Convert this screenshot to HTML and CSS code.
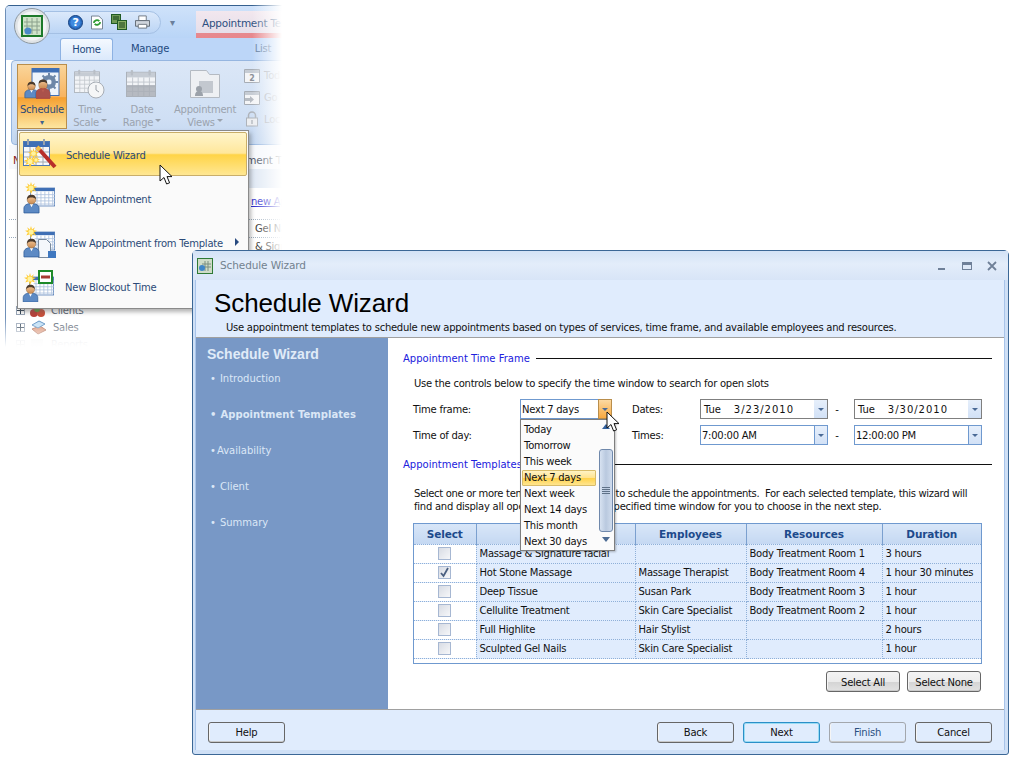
FILE: index.html
```html
<!DOCTYPE html>
<html lang="en">
<head>
<meta charset="utf-8">
<title>Schedule Wizard</title>
<link rel="stylesheet" href="styles.css">
</head>
<body>
<svg class="defs" width="0" height="0" aria-hidden="true">
  <defs>
    <linearGradient id="skin" x1="0" y1="0" x2="0" y2="1"><stop offset="0" stop-color="#f6c99a"/><stop offset="1" stop-color="#c98a50"/></linearGradient>
    <symbol id="person" viewBox="0 0 18 22">
      <path d="M1 21v-5c0-3 3-5 8-5s8 2 8 5v5z" fill="#5d8ac4" stroke="#2e5c98" stroke-width=".8"/>
      <path d="M7 11l2 4 2-4z" fill="#fff"/>
      <circle cx="9" cy="7" r="4.6" fill="url(#skin)" stroke="#8a6238" stroke-width=".5"/>
      <path d="M4.4 7C4 3 6.500 1.800 9 1.800S14 3 13.600 7c-1-2-2.500-2.400-4.600-2.400S5.400 5 4.400 7z" fill="#4a3a2c"/>
    </symbol>
    <symbol id="sun" viewBox="0 0 14 14">
      <path d="M7 0l1.200 4L11.500 1.500 10 5l4 .5-3.500 2 2.500 3.500-4-1.500L7 14l-1.500-4.500L1.500 11l2-3.500L0 5.500 4 5 2.500 1.500 5.800 4z" fill="#ffcc33"/>
      <circle cx="7" cy="7" r="3" fill="#fff3a0"/>
    </symbol>
    <symbol id="sheet" viewBox="0 0 32 24">
      <rect x=".5" y=".5" width="31" height="23" fill="#fff" stroke="#4f79b4"/>
      <rect x=".5" y=".5" width="31" height="4" fill="#3f6fb5"/>
      <path d="M6 9h26M6 13h26M6 17h26M6 21h26M9 5v18M14 5v18M19 5v18M24 5v18M29 5v18" stroke="#a9bfdc" stroke-width="1"/>
    </symbol>
    <symbol id="graycal" viewBox="0 0 32 30">
      <rect x=".5" y="3.500" width="31" height="26" fill="#f2f4f7" stroke="#a7adb5"/>
      <rect x="1" y="4" width="30" height="5" fill="#c6ccd4"/>
      <rect x="5" y="1" width="2.500" height="6" rx="1" fill="#b8bec6"/>
      <rect x="24" y="1" width="2.500" height="6" rx="1" fill="#b8bec6"/>
      <path d="M1 14h30M1 19h30M1 24h30M7 9v20M13 9v20M19 9v20M25 9v20" stroke="#c1c6cd"/>
    </symbol>
    <symbol id="cursor" viewBox="0 0 14 22">
      <path d="M1 1v16l4-3.500 2.600 6.500 3-1.200-2.600-6.200h5z" fill="#fff" stroke="#111" stroke-width="1"/>
    </symbol>
  </defs>
</svg>

<main class="desktop">
  <section class="appwin">
    <div class="qat-row">
      <div class="orb">
        <svg width="36" height="36" viewBox="0 0 36 36">
          <circle cx="18" cy="18" r="17.500" fill="#dfe3e6" stroke="#8c979f"/>
          <circle cx="18" cy="18" r="14.500" fill="#f3f5f5"/>
          <rect x="8" y="8" width="20" height="20" fill="#cfe3c8" stroke="#1d7a2a" stroke-width="2"/>
          <path d="M13 10v16M18 10v16M23 10v16M10 14h16M10 18h16M10 22h16" stroke="#8aa08c"/>
          <circle cx="14" cy="23" r="3.500" fill="#4a89c8"/>
        </svg>
      </div>
      <div class="qat-pill">
        <svg width="15" height="15" viewBox="0 0 15 15"><circle cx="7.500" cy="7.500" r="7" fill="#2a6cc0" stroke="#16407e"/><circle cx="7.500" cy="7.500" r="5" fill="#3f8adf"/><text x="7.500" y="11" class="q-mark">?</text></svg>
        <svg width="12" height="15" viewBox="0 0 13 15"><path d="M.5.500h8l4 4v10H.5z" fill="#fff" stroke="#6b7a8a"/><path d="M3 8a3.500 3.500 0 0 1 6-2M10 7a3.500 3.500 0 0 1-6 2" fill="none" stroke="#2c9a30" stroke-width="2"/></svg>
        <svg width="16" height="16" viewBox="0 0 16 16"><rect x=".5" y=".5" width="9" height="9" fill="#6f9a55" stroke="#1f5a24"/><rect x="6.500" y="6.500" width="9" height="9" fill="#8ab066" stroke="#1f5a24"/><path d="M2 3h6M2 5h6M8 9h6M8 11h6M8 13h6" stroke="#123f18"/></svg>
        <svg width="15" height="14" viewBox="0 0 16 14"><path d="M4 .5h8v5H4z" fill="#fff" stroke="#6e7680"/><path d="M.5 5.500h15v6H.5z" fill="#cfd5dc" stroke="#5e6670"/><path d="M3.500 9.500h9v4h-9z" fill="#fff" stroke="#6e7680"/></svg>
      </div>
      <span class="qat-more">▾</span>
      <span class="ctx-tab">Appointment Templates</span>
    </div>
    <div class="tabs">
      <span class="tab active">Home</span>
      <span class="tab">Manage</span>
      <span class="tab last">List</span>
    </div>
    <div class="ribbon">
      <div class="rb rb-on">
        <svg width="36" height="32" viewBox="0 0 36 32">
          <rect x="8" y=".5" width="27" height="27" fill="#eef4fb" stroke="#3f6fb5"/>
          <rect x="8" y=".5" width="27" height="4" fill="#3f6fb5"/>
          <circle cx="25" cy="14" r="7" fill="#6d87a8"/><circle cx="25" cy="14" r="3" fill="#eef4fb"/>
          <path d="M25 5v18M16 14h18M18.500 7.500l13 13M31.500 7.500l-13 13" stroke="#6d87a8" stroke-width="2"/>
          <circle cx="25" cy="14" r="2.500" fill="#eef4fb"/>
          <use href="#person" x="0" y="12" width="15" height="19"/>
          <g transform="translate(11 11)"><use href="#person" width="16" height="20"/></g>
          <path d="M12 31v-6c0-3 3-5 7-5s7 2 7 5v6z" fill="#b24a3e" opacity=".9"/>
          <circle cx="19" cy="16" r="4.200" fill="url(#skin)"/>
          <path d="M14.800 16c-.4-3.500 2-4.500 4.200-4.500s4.600 1 4.200 4.500c-1-1.600-2.400-2-4.200-2s-3.200.4-4.200 2z" fill="#4a3a2c"/>
        </svg>
        <span class="rb-label">Schedule</span>
        <span class="rb-arrow">▾</span>
      </div>
      <div class="rb rb-time">
        <svg width="32" height="30" viewBox="0 0 32 30"><use href="#graycal" width="26" height="24"/><circle cx="22" cy="21" r="8" fill="#f5f6f7" stroke="#a7adb5"/><path d="M22 16v5l3 2" fill="none" stroke="#9aa0a8"/></svg>
        <span class="rb-label">Time</span>
        <span class="rb-label">Scale<i class="caret"></i></span>
      </div>
      <div class="rb rb-date">
        <svg width="32" height="30" viewBox="0 0 32 30"><use href="#graycal" width="30" height="28"/><rect x="1" y="16" width="28" height="11" fill="#a6abb3" opacity=".8"/></svg>
        <span class="rb-label">Date</span>
        <span class="rb-label">Range<i class="caret"></i></span>
      </div>
      <div class="rb rb-views">
        <svg width="30" height="30" viewBox="0 0 30 30"><path d="M.5 1.500h16l3 4h10v23H.5z" fill="#eef0f3" stroke="#b4bac2"/><rect x="9" y="12" width="14" height="12" fill="#c3c8cf"/><circle cx="9" cy="20" r="3" fill="#9ca2aa"/><path d="M5 27c0-4 2-5 4-5s4 1 4 5z" fill="#9ca2aa"/></svg>
        <span class="rb-label">Appointment</span>
        <span class="rb-label">Views<i class="caret"></i></span>
      </div>
      <div class="rb-small">
        <div class="rs-row"><svg width="16" height="16" viewBox="0 0 16 16"><path d="M.5 2.500h15v13H.5z" fill="#f4f5f7" stroke="#a7adb5"/><rect x="1" y="3" width="14" height="3" fill="#c6ccd4"/><text x="8" y="14" class="cal-num">2</text></svg><span>Today</span></div>
        <div class="rs-row"><svg width="16" height="16" viewBox="0 0 16 16"><path d="M.5 2.500h15v13H.5z" fill="#f4f5f7" stroke="#a7adb5"/><rect x="1" y="3" width="14" height="3" fill="#c6ccd4"/><path d="M1 9h5V7l4 3.500L6 14v-2H1z" fill="#b7bcc3"/></svg><span>Go To</span></div>
        <div class="rs-row"><svg width="16" height="16" viewBox="0 0 16 16"><path d="M4.500 7V4.500a3.500 3.500 0 0 1 7 0V7" fill="none" stroke="#aeb3ba" stroke-width="1.500"/><rect x="2.500" y="7" width="11" height="8" fill="#eceef1" stroke="#aeb3ba"/><path d="M8 9v4" stroke="#9ea4ac"/></svg><span>Lock</span></div>
      </div>
    </div>
    <div class="doc">
      <div class="doc-heads"><span class="n-cut">N</span><span>ment T</span></div>
      <div class="doc-band"></div>
      <div class="doc-link"><a>new Ap</a></div>
      <div class="doc-cell">Gel Na</div>
      <div class="doc-cell doc-dark">&amp; Sign</div>
      <div class="tree">
        <div class="tree-row tree-clients"><i class="plus"></i><svg width="16" height="12" viewBox="0 0 16 12"><circle cx="4" cy="8" r="4" fill="#b8423a"/><circle cx="11" cy="8" r="4" fill="#c8503a"/><circle cx="7" cy="4" r="3" fill="#5e9a40"/></svg><span>Clients</span></div>
        <div class="tree-row"><i class="plus"></i><svg width="18" height="16" viewBox="0 0 18 16"><path d="M2 9l8-3 6 4-8 4z" fill="#d88a6a" stroke="#a85c40"/><path d="M2 5l7-4 6 3-7 4z" fill="#bcdcf4" stroke="#4f86bc"/></svg><span>Sales</span></div>
        <div class="tree-row tree-faded"><i class="plus"></i><svg width="16" height="14" viewBox="0 0 16 14"><rect x="1" y="1" width="12" height="12" fill="#d8dce0"/></svg><span>Reports</span></div>
      </div>
    </div>
  </section>
  <div class="fade-right"></div>
  <div class="fade-bottom"></div>

  <nav class="menu">
    <div class="menu-item hot">
      <svg width="34" height="32" viewBox="0 0 34 32">
        <rect x=".5" y="3.500" width="26" height="24" fill="#f6f8fb" stroke="#4f79b4"/>
        <rect x="1" y="4" width="25" height="5" fill="#3f6fb5"/>
        <rect x="4" y="1" width="2" height="6" fill="#98a2ae"/><rect x="20" y="1" width="2" height="6" fill="#98a2ae"/>
        <path d="M1 14h25M1 19h25M1 24h25M7 9v18M13 9v18M20 9v18" stroke="#a3a9b2"/>
        <path d="M14 9l18 20" stroke="#b82e2a" stroke-width="4"/><path d="M14 9l3 3" stroke="#f2c24a" stroke-width="4"/>
        <use href="#sun" x="5" y="10" width="11" height="11"/><use href="#sun" x="1" y="17" width="12" height="13"/><use href="#sun" x="9" y="18" width="8" height="8"/>
      </svg>
      <span>Schedule Wizard</span>
    </div>
    <div class="menu-item">
      <svg width="34" height="32" viewBox="0 0 34 32"><use href="#sheet" x="8" y="3" width="25" height="24"/><use href="#sun" x="3" y="0" width="12" height="12"/><use href="#person" x="1" y="11" width="17" height="21"/></svg>
      <span>New Appointment</span>
    </div>
    <div class="menu-item">
      <svg width="34" height="32" viewBox="0 0 34 32"><use href="#sheet" x="8" y="3" width="25" height="24"/><use href="#sun" x="3" y="0" width="12" height="12"/><path d="M16.500 13.500h8l4 4v14h-12z" fill="#f4f7fb" stroke="#7a8a9c"/><rect x="26" y="25" width="8" height="7" fill="#3f78c0"/><use href="#person" x="1" y="11" width="17" height="21"/></svg>
      <span>New Appointment from Template</span>
      <i class="sub-arrow"></i>
    </div>
    <div class="menu-item">
      <svg width="34" height="32" viewBox="0 0 34 32"><use href="#sheet" x="7" y="4" width="25" height="24"/><rect x="17" y="1" width="13" height="12" fill="#fff" stroke="#1e8a2a" stroke-width="2"/><rect x="19" y="5.500" width="9" height="3" fill="#a83a34"/><use href="#sun" x="2" y="3" width="12" height="12"/><use href="#person" x="0" y="13" width="17" height="20"/></svg>
      <span>New Blockout Time</span>
    </div>
  </nav>
  <svg class="cursor cursor-menu" width="14" height="22"><use href="#cursor"/></svg>

  <section class="wizard">
    <header class="titlebar">
      <svg width="16" height="16" viewBox="0 0 16 16"><rect x=".5" y=".5" width="15" height="15" fill="#cfdcc8" stroke="#2f7a36"/><path d="M8 3v10M11 3v10M5 6h9M5 9h9" stroke="#7a8e80"/><circle cx="5" cy="10" r="3" fill="#3f86c8"/></svg>
      <span class="title-text">Schedule Wizard</span>
      <span class="win-btns">
        <svg width="10" height="10" viewBox="0 0 10 10"><path d="M1 7h7v2H1z" fill="#6f8098"/></svg>
        <svg width="10" height="10" viewBox="0 0 10 10"><path d="M0 1h10v8H0z" fill="#6f8098"/><path d="M1 4h8v4H1z" fill="#dfe9f7"/></svg>
        <svg width="10" height="10" viewBox="0 0 10 10"><path d="M1 1l8 8M9 1l-8 8" stroke="#6f8098" stroke-width="1.800"/></svg>
      </span>
    </header>
    <div class="frame">
      <div class="banner">
        <h1>Schedule Wizard</h1>
        <p>Use appointment templates to schedule new appointments based on types of services, time frame, and available employees and resources.</p>
      </div>
      <div class="body">
        <aside class="side">
          <h2>Schedule Wizard</h2>
          <ul>
            <li>Introduction</li>
            <li class="current">Appointment Templates</li>
            <li class="tight">Availability</li>
            <li>Client</li>
            <li>Summary</li>
          </ul>
        </aside>
        <div class="content">
          <div class="legend"><span>Appointment Time Frame</span></div>
          <p class="hint">Use the controls below to specify the time window to search for open slots</p>
          <div class="form">
            <label>Time frame:</label>
            <div class="combo focus"><span>Next 7 days</span><b class="drop hot-drop"></b></div>
            <label class="l2">Dates:</label>
            <div class="combo gray"><span class="date"><em>Tue</em>3/23/2010</span><b class="drop pale"></b></div>
            <i class="dash">-</i>
            <div class="combo gray"><span class="date"><em>Tue</em>3/30/2010</span><b class="drop pale"></b></div>
            <label>Time of day:</label>
            <div class="combo blank"></div>
            <label class="l2">Times:</label>
            <div class="combo blue"><span>7:00:00 AM</span><b class="drop"></b></div>
            <i class="dash">-</i>
            <div class="combo blue"><span>12:00:00 PM</span><b class="drop"></b></div>
          </div>
          <div class="legend second"><span>Appointment Templates</span></div>
          <p class="para">Select one or more templates from the list to schedule the appointments.&nbsp; For each selected template, this wizard will<br>find and display all open slots within the specified time window for you to choose in the next step.</p>
          <div class="gridbox">
            <table class="grid">
              <colgroup><col class="c1"><col class="c2"><col class="c3"><col class="c4"><col class="c5"></colgroup>
              <thead><tr><th>Select</th><th>Template</th><th>Employees</th><th>Resources</th><th>Duration</th></tr></thead>
              <tbody>
                <tr><td class="ck"><i class="box"></i></td><td>Massage &amp; Signature facial</td><td></td><td>Body Treatment Room 1</td><td>3 hours</td></tr>
                <tr><td class="ck"><i class="box on"><svg width="11" height="11" viewBox="0 0 11 11"><path d="M2 6l2.500 3L9 1" fill="none" stroke="#4a5f80" stroke-width="1.800"/></svg></i></td><td>Hot Stone Massage</td><td>Massage Therapist</td><td>Body Treatment Room 4</td><td>1 hour 30 minutes</td></tr>
                <tr><td class="ck"><i class="box"></i></td><td>Deep Tissue</td><td>Susan Park</td><td>Body Treatment Room 3</td><td>1 hour</td></tr>
                <tr><td class="ck"><i class="box"></i></td><td>Cellulite Treatment</td><td>Skin Care Specialist</td><td>Body Treatment Room 2</td><td>1 hour</td></tr>
                <tr><td class="ck"><i class="box"></i></td><td>Full Highlite</td><td>Hair Stylist</td><td></td><td>2 hours</td></tr>
                <tr><td class="ck"><i class="box"></i></td><td>Sculpted Gel Nails</td><td>Skin Care Specialist</td><td></td><td>1 hour</td></tr>
              </tbody>
            </table>
          </div>
          <div class="grid-btns">
            <button class="btn silver">Select All</button>
            <button class="btn silver">Select None</button>
          </div>
          <div class="listbox">
            <div class="opts">
              <div>Today</div><div>Tomorrow</div><div>This week</div><div class="sel">Next 7 days</div><div>Next week</div><div>Next 14 days</div><div>This month</div><div>Next 30 days</div>
            </div>
            <div class="sbar">
              <i class="s-up"></i>
              <div class="thumb"><i></i></div>
              <i class="s-down"></i>
            </div>
          </div>
        </div>
      </div>
      <footer class="foot">
        <button class="btn">Help</button>
        <div class="foot-right">
          <button class="btn">Back</button>
          <button class="btn default">Next</button>
          <button class="btn disabled">Finish</button>
          <button class="btn">Cancel</button>
        </div>
      </footer>
    </div>
  </section>
  <svg class="cursor cursor-list" width="14" height="22"><use href="#cursor"/></svg>
</main>
</body>
</html>
```
FILE: styles.css
```css
* { box-sizing: border-box; }
html, body { margin: 0; padding: 0; background: #fff; }
body { font-family: "DejaVu Sans", sans-serif; font-size: 10px; letter-spacing: -.25px; color: #111; overflow: hidden; }
.defs { position: absolute; }
.desktop { position: relative; width: 1018px; height: 760px; overflow: hidden; }

/* back application window */
.appwin { position: absolute; left: 5px; top: 5px; width: 285px; height: 345px; background: #fff; border-left: 1px solid #6e8fb8; border-top: 1px solid #35608f; border-radius: 5px 0 0 0; overflow: hidden; }
.qat-row { height: 32px; display: flex; align-items: center; background: linear-gradient(#cfe2fa, #b9d5f7); position: relative; padding-left: 8px; }
.orb { width: 36px; height: 36px; margin-top: 8px; position: relative; z-index: 2; flex: none; }
.qat-pill { display: flex; align-items: center; gap: 8px; height: 23px; margin-left: -6px; padding: 0 10px 0 23px; background: linear-gradient(#dbe9fb, #bcd5f5); border: 1px solid #a4c0e4; border-radius: 0 12px 12px 0; flex: none; }
.qat-more { color: #6a7f9c; font-size: 10px; margin-left: 9px; width: 16px; flex: none; }
.ctx-tab { margin-left: 10px; height: 27px; padding: 6px 6px; align-self: flex-end; background: linear-gradient(#f2e7ee, #e6dfea 80%, #e58a90 80%, #e9878d); color: #2d4f80; white-space: nowrap; font-size: 10.500px; flex: none; }
.tabs { height: 22px; display: flex; background: #bcd6f8; padding-left: 54px; position: relative; }
.tab { width: 53px; flex: none; text-align: center; line-height: 21px; color: #1f4a80; }
.tab.active { background: linear-gradient(#f4f9ff, #dbe9fb); border: 1px solid #8db2e3; border-bottom: 0; border-radius: 3px 3px 0 0; }
.tab:nth-child(2) { width: 74px; }
.tab.last { margin-left: 51px; width: 50px; color: #5c7aa0; }
.ribbon { height: 85px; display: flex; margin: 0 0 0 5px; padding: 3px 0 0 5px; background: linear-gradient(#dbe7f7, #cfdff4 70%, #c2d6f0); border: 1px solid #96b6e0; border-radius: 4px 0 0 4px; position: relative; }
.rb { width: 50px; height: 65px; flex: none; display: flex; flex-direction: column; align-items: center; color: #9ba3ae; font-size: 10px; line-height: 13px; padding-top: 4px; }
.rb svg { height: 32px; margin-bottom: 3px; flex: none; }
.rb-on { padding-top: 3px; background: linear-gradient(#fad59a, #f8b460 50%, #f5a030 52%, #fde6a0); border: 1px solid #b98e4c; color: #2a4a78; }
.rb-time { width: 46px; }
.rb-date { width: 58px; }
.rb-views { width: 68px; }
.rb-label { white-space: nowrap; }
.rb-arrow { font-size: 8px; color: #3f628f; line-height: 13px; }
.caret { display: inline-block; margin-left: 2px; vertical-align: 4px; border: 3px solid transparent; border-top-color: #9ba3ae; border-bottom: 0; }
.rb-small { margin-left: 5px; flex: none; display: flex; flex-direction: column; gap: 6px; padding-top: 3px; }
.rs-row { display: flex; align-items: center; gap: 4px; color: #a9b0ba; white-space: nowrap; height: 16px; }
.doc { position: relative; height: 210px; padding-left: 3px; background: #fff; }
.doc-heads { display: flex; justify-content: space-between; height: 24px; padding: 9px 8px 0 4px; background: #f6f8fc; color: #3d4a5a; font-size: 10.500px; white-space: nowrap; }
.n-cut { color: #8a2020; }
.doc-band { height: 19px; background: linear-gradient(90deg, #fff 230px, #dfe8f4 230px); }
.doc-link { height: 31px; padding: 8px 0 0 242px; white-space: nowrap; }
.doc-link a { color: #2222cc; text-decoration: underline; }
.doc-cell { height: 18px; padding: 3px 0 0 246px; white-space: nowrap; border-top: 1px dotted #9ab; }
.tree { position: absolute; left: 10px; top: 157px; }
.tree-row { display: flex; align-items: center; gap: 5px; height: 17px; color: #55606e; }
.plus { width: 9px; height: 9px; border: 1px solid #97a4b5; background: linear-gradient(90deg, transparent 3px, #345 3px, #345 4px, transparent 4px), linear-gradient(transparent 3px, #345 3px, #345 4px, transparent 4px), #fff; }
.tree-faded { opacity: .3; }
.fade-right { position: absolute; left: 252px; top: 0; width: 40px; height: 352px; background: linear-gradient(90deg, rgba(255,255,255,0), #fff 75%); }
.fade-bottom { position: absolute; left: 0; top: 318px; width: 292px; height: 34px; background: linear-gradient(rgba(255,255,255,0), #fff 85%); }

/* dropdown menu */
.menu { position: absolute; left: 17px; top: 130px; width: 232px; height: 179px; background: #fafafa; border: 1px solid #8a8a8a; padding: 1px; box-shadow: 2px 3px 4px rgba(90, 90, 90, .45); display: flex; flex-direction: column; }
.menu-item { height: 44px; flex: none; display: flex; align-items: center; padding-left: 3px; color: #2b4a78; font-size: 10px; position: relative; white-space: nowrap; }
.menu-item svg { margin-right: 9px; flex: none; }
.menu-item span { padding-top: 2px; }
.menu-item.hot { background: linear-gradient(#fff5cc, #ffe79b 48%, #ffd447 52%, #ffe793); border: 1px solid #c9ae6a; border-radius: 2px; }
.sub-arrow { position: absolute; left: 216px; top: 18px; border: 4px solid transparent; border-left: 4px solid #284a80; border-right: 0; }
.cursor { position: absolute; z-index: 9; }
.cursor-menu { left: 159px; top: 164px; }
.cursor-list { left: 606px; top: 411px; }

/* wizard */
.wizard { position: absolute; left: 192px; top: 250px; width: 817px; height: 505px; display: flex; flex-direction: column; background: #cfe0f6; border: 1px solid #3b6796; border-radius: 5px 5px 3px 3px; }
.titlebar { height: 29px; flex: none; display: flex; align-items: center; gap: 7px; padding: 0 11px 0 4px; background: linear-gradient(#d3e2f6, #e3edfa 45%, #d8e5f7); color: #72828f; font-size: 10.500px; letter-spacing: -.1px; }
.title-text { margin-top: -2px; }
.win-btns { margin-left: auto; display: flex; gap: 15px; }
.frame { flex: 1; margin: 0 3px 4px 2px; display: flex; flex-direction: column; background: #fff; min-height: 0; border-left: 1px solid #a8c4ea; border-right: 1px solid #a8c4ea; }
.banner { height: 58px; flex: none; background: #e0ecfd; border-bottom: 1px solid #a0a0a0; padding: 7px 0 0 18px; }
.banner h1 { margin: 0; font-family: "Liberation Sans", sans-serif; font-size: 26px; line-height: 32px; font-weight: 400; letter-spacing: -.1px; color: #000; }
.banner p { margin: 2px 0 0 12px; line-height: 13px; color: #111; white-space: nowrap; }
.body { flex: 1; display: flex; min-height: 0; }
.side { width: 192px; flex: none; background: #7898c6; padding: 7px 0 0 11px; color: #dbe7f6; letter-spacing: 0; }
.side h2 { margin: 0; font-family: "Liberation Sans", sans-serif; font-size: 14px; line-height: 18px; font-weight: 700; color: #e0ebf8; }
.side ul { list-style: none; margin: 8px 0 0; padding: 0; }
.side li { height: 36px; padding-left: 3px; line-height: 16px; }
.side li::before { content: "•"; margin-right: 4px; }
.side li.tight::before { margin-right: 1px; }
.side li.current { font-weight: 700; letter-spacing: .05px; }
.content { flex: 1; position: relative; padding: 12px 12px 0 15px; min-width: 0; }
.legend { display: flex; align-items: center; gap: 6px; height: 16px; color: #2020dd; font-size: 10px; letter-spacing: 0; }
.legend::after { content: ""; flex: 1; height: 1px; background: #111; }
.hint { margin: 11px 0 0 11px; line-height: 13px; }
.form { margin-top: 9px; display: grid; grid-template-columns: 107px 92px 88px 128px 26px 128px; grid-template-rows: 20px 20px; row-gap: 6px; margin-left: 10px; align-items: center; }
.form label.l2 { padding-left: 20px; }
.combo { height: 20px; display: flex; align-items: center; background: #fff; border: 1px solid #7b9ebd; padding-left: 1px; position: relative; white-space: nowrap; }
.combo.gray { border-color: #7f7f7f; padding-left: 3px; }
.combo.blue { border-color: #6f99cf; padding-left: 1px; }
.combo.focus { border-color: #6f99cf; }
.combo.blank { visibility: hidden; }
.combo .date { letter-spacing: 1px; }
.combo .date em { font-style: normal; margin-right: 13px; letter-spacing: -.1px; }
.dash { font-style: normal; text-align: center; padding-right: 8px; }
.drop { position: absolute; right: 0; top: 0; bottom: 0; width: 13px; background: linear-gradient(#e6effb, #d2e1f6); border-left: 1px solid #6f99cf; display: flex; align-items: center; justify-content: center; }
.drop::after { content: ""; border: 3px solid transparent; border-top: 3px solid #4a6a96; border-bottom: 0; }
.drop.pale { border-left: 0; }
.drop.hot-drop { background: linear-gradient(#fbd9a2, #f9a93f); border: 1px solid #b98e4c; top: -1px; bottom: -1px; right: -1px; width: 14px; }
.legend.second { margin-top: 11px; }
.para { margin: 15px 0 0 11px; line-height: 13px; white-space: nowrap; }
.para::first-line { letter-spacing: -.33px; }
.gridbox { margin: 10px 0 0 10px; width: 569px; height: 141px; border: 1px solid #6f99cf; background: #fff; }
.grid { width: 100%; table-layout: fixed; border-collapse: collapse; background: #e0ecfd; }
.c1 { width: 62px; } .c2 { width: 159px; } .c3 { width: 111px; } .c4 { width: 136px; } .c5 { width: 99px; }
.grid th { height: 20px; padding: 0; font-size: 10.500px; letter-spacing: -.1px; color: #1d4a8c; background: linear-gradient(#d8e6f8, #c4d8f2); border-right: 1px solid #7ba0cf; font-weight: 700; }
.grid th:last-child { border-right: 0; }
.grid td { height: 19px; padding: 0 0 0 3px; border: 1px dotted #8fb0d8; white-space: nowrap; overflow: hidden; }
.grid td:first-child { border-left: 0; }
.grid td:last-child { border-right: 0; }
.grid td.ck { background: #fff; text-align: center; padding: 0; }
.box { display: inline-block; width: 13px; height: 13px; vertical-align: middle; background: linear-gradient(135deg, #d8dce4, #f6f7f9); border: 1px solid #a6b7d2; position: relative; }
.box svg { position: absolute; left: 0; top: 0; }
.grid-btns { display: flex; justify-content: flex-end; gap: 7px; margin: 7px 0 0; padding-right: 11px; }
.btn { font: inherit; letter-spacing: inherit; color: #111; width: 77px; height: 21px; padding: 1px 0 0; background: #e0ecfd; border: 1px solid #666; border-radius: 3px; box-shadow: inset 0 -1px 0 #c9c9c9, inset 1px 0 0 #f5f5f5; }
.btn.silver { width: 74px; background: linear-gradient(#f4f4f4, #ececec 50%, #d5d5d5 55%, #e2e2e2); }
.btn.default { border-color: #2a8fc8; box-shadow: inset 0 0 0 1px #9adcf4; }
.btn.disabled { border-color: #a3a7ad; color: #2a4f80; }
.foot { height: 41px; flex: none; display: flex; justify-content: space-between; align-items: center; padding: 4px 12px 0 12px; background: #e0ecfd; border-top: 1px solid #a0a0a0; }
.foot-right { display: flex; gap: 9px; }

/* open list over the form */
.listbox { position: absolute; left: 132px; top: 81px; width: 95px; height: 132px; background: #fbfbfb; border: 1px solid #7e7e7e; display: flex; box-shadow: 1px 1px 2px rgba(0,0,0,.25); z-index: 5; }
.opts { width: 76px; padding: 2px 0 0 1px; }
.opts div { height: 16px; line-height: 16px; padding-left: 2px; white-space: nowrap; color: #111; }
.opts .sel { background: linear-gradient(#fff3c4, #ffe490 48%, #ffd24a 52%, #ffe58f); border: 1px solid #d8bc6a; border-radius: 1px; width: 74px; padding-left: 1px; line-height: 14px; }
.sbar { flex: 1; display: flex; flex-direction: column; align-items: center; padding: 4px 0 0; }
.s-up { border: 4px solid transparent; border-bottom: 5px solid #33629f; border-top: 0; }
.s-down { margin-top: 5px; border: 4px solid transparent; border-top: 5px solid #4d6c94; border-bottom: 0; }
.thumb { width: 14px; height: 83px; margin-top: 20px; background: linear-gradient(90deg, #d7e2f1, #b9c9df 50%, #d0dced); border: 1px solid #6f88ab; border-radius: 3px; display: flex; align-items: center; justify-content: center; }
.thumb i { width: 8px; height: 7px; background: repeating-linear-gradient(#5f7288 0 1px, transparent 1px 2px); }
.q-mark { font-size: 11px; font-weight: 700; fill: #fff; text-anchor: middle; }
.cal-num { font-size: 8px; font-weight: 700; fill: #8a9098; text-anchor: middle; }
```
